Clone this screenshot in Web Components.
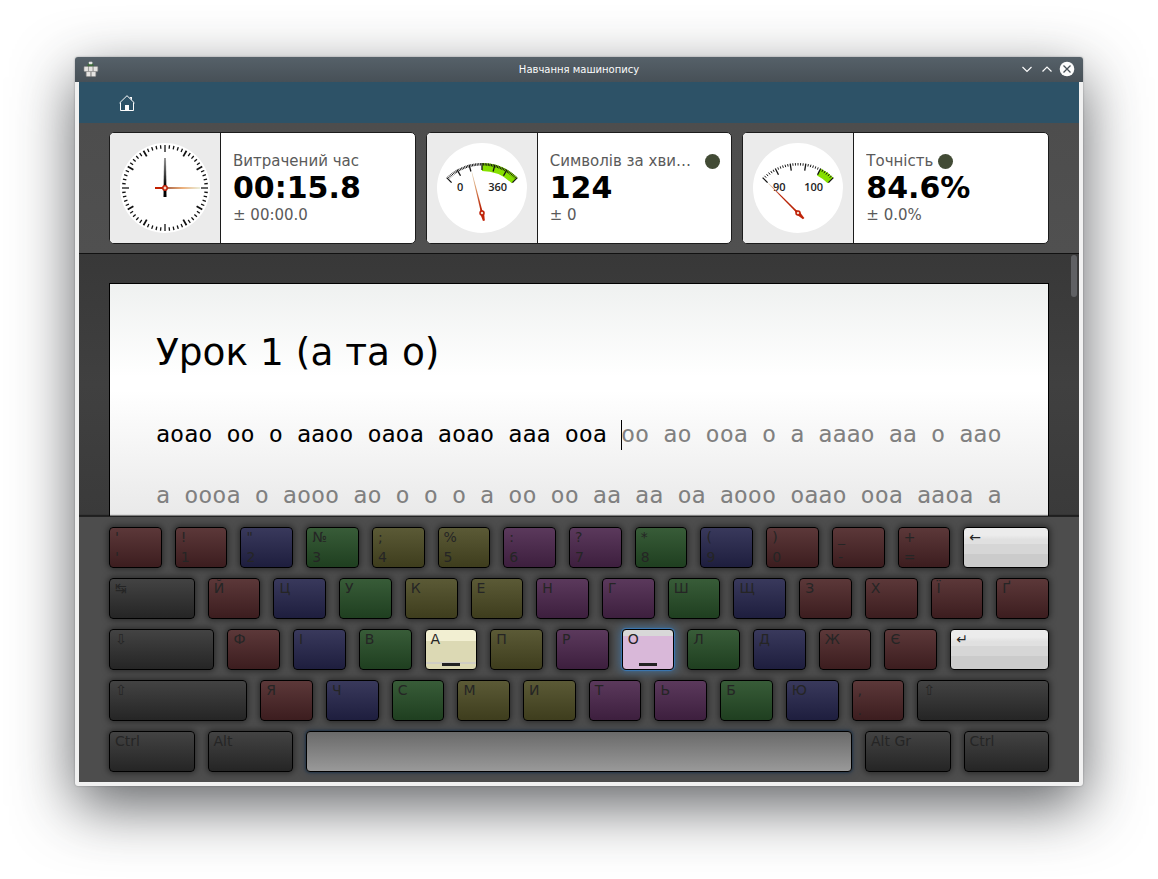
<!DOCTYPE html>
<html lang="uk">
<head>
<meta charset="utf-8">
<title>Навчання машинопису</title>
<style>
  * { box-sizing: border-box; }
  body {
    margin: 0;
    height: 100vh;
    min-height: 760px;
    padding: 57px 75px 93px;
    display: flex;
    background: #fff;
    font-family: "DejaVu Sans", sans-serif;
  }
</style>
</head>
<body>
<app-window caption="Навчання машинопису">
  <app-toolbar></app-toolbar>
  <stats-bar>
    <stat-card label="Витрачений час" value="00:15.8" delta="± 00:00.0">
      <clock-dial seconds="15"></clock-dial>
    </stat-card>
    <stat-card label="Символів за хвилину" value="124" delta="± 0" lamp>
      <gauge-dial low="0" high="360" sections="6" minor="8" good="0" needle="-14"></gauge-dial>
    </stat-card>
    <stat-card label="Точність" value="84.6%" delta="± 0.0%" lamp>
      <gauge-dial low="90" high="100" sections="5" minor="6" good="27" needle="-45"></gauge-dial>
    </stat-card>
  </stats-bar>
  <training-sheet heading="Урок 1 (а та о)"
    typed="аоао оо о ааоо оаоа аоао ааа ооа "
    rest="оо ао ооа о а аааo аа о аао|а оооа о аооо ао о о о а оо оо аа аа оа аооо оаао ооа ааоа а"></training-sheet>
  <key-board></key-board>
</app-window>

<script>
const mount = (el, html) => { el.attachShadow({ mode: 'open' }).innerHTML = '<style>*{box-sizing:border-box}</style>' + html; };

/* Window frame with title bar and system buttons */
customElements.define('app-window', class extends HTMLElement {
  connectedCallback() {
    mount(this, `
    <style>
      :host { flex: 1; min-width: 0; display: flex; flex-direction: column; background: #f1f1f1;
        border-radius: 3px; box-shadow: 0 20px 60px rgba(35,38,41,.72), 0 0 2px rgba(35,38,41,.4); }
      header { display: grid; grid-template-columns: 60px 1fr 60px; align-items: center; height: 25px; padding: 0 8px 1px;
        background: linear-gradient(#566169, #475057); border-radius: 3px 3px 0 0; color: #fcfcfc; }
      h1 { margin: 0; font-size: 10px; font-weight: 400; text-align: center; }
      nav { display: flex; justify-content: flex-end; gap: 4px; }
      button { width: 16px; height: 16px; padding: 0; border: 0; background: none; }
      svg { display: block; }
      main { flex: 1; min-height: 0; margin: 0 4px 4px; display: flex; flex-direction: column; background: #4d4d4d; overflow: hidden; }
    </style>
    <header>
      <svg width="16" height="16" viewBox="0 0 16 16">
        <path d="M5.500 2h4l1.500 3.500H4z" fill="#3f6b3c"/><rect x="5.800" y=".800" width="3.600" height="2.400" rx=".6" fill="#e4e4e4"/>
        <g fill="#e6e4e2" stroke="#8d8b89" stroke-width=".6">
          <rect x="1" y="5.500" width="4.400" height="5" rx=".8"/><rect x="5.600" y="5.500" width="4.400" height="5" rx=".8"/><rect x="10.200" y="5.500" width="4.600" height="5" rx=".8"/>
          <rect x="3.200" y="10.600" width="4.600" height="5" rx=".8"/><rect x="8.200" y="10.600" width="4.600" height="5" rx=".8"/>
        </g>
      </svg>
      <h1>${this.getAttribute('caption')}</h1>
      <nav>
        <button aria-label="Мінімізувати"><svg width="16" height="16" fill="none" stroke="#fcfcfc" stroke-width="1.2"><path d="M3.5 6 8 10.500 12.500 6"/></svg></button>
        <button aria-label="Максимізувати"><svg width="16" height="16" fill="none" stroke="#fcfcfc" stroke-width="1.2"><path d="M3.500 10.500 8 6l4.500 4.500"/></svg></button>
        <button aria-label="Закрити"><svg width="16" height="16"><circle cx="8" cy="8" r="7.300" fill="#fcfcfc"/><path d="m4.500 4.500 7 7m0-7-7 7" stroke="#475057" stroke-width="1.300"/></svg></button>
      </nav>
    </header>
    <main><slot></slot></main>`);
  }
});

customElements.define('app-toolbar', class extends HTMLElement {
  connectedCallback() {
    mount(this, `
    <style>
      :host { flex: none; display: flex; align-items: center; height: 41px; padding: 0 38px; background: #2d5267; }
      button { width: 20px; height: 20px; padding: 2px; border: 0; background: none; }
      svg { display: block; }
    </style>
    <button aria-label="Початкова сторінка"><svg width="16" height="16" viewBox="0 0 16 16" fill="none" stroke="#fcfcfc">
      <path d="M.5 8 8 .700 15.500 8M1.500 7.500v8h13v-8"/><path d="M10.500 2h2.500v3.500z" fill="#fcfcfc" stroke="none"/><path d="M6 10h4v6H6z" fill="#fcfcfc" stroke="none"/>
    </svg></button>`);
  }
});

customElements.define('stats-bar', class extends HTMLElement {
  connectedCallback() {
    mount(this, `
    <style>
      :host { flex: none; display: grid; grid-template-columns: repeat(3, minmax(0, 1fr)); gap: 10px; padding: 9px 30px;
        background: linear-gradient(#4d4d4d, #505050); border-bottom: 1px solid #111; }
    </style><slot></slot>`);
  }
});

customElements.define('stat-card', class extends HTMLElement {
  connectedCallback() {
    const a = n => this.getAttribute(n);
    mount(this, `
    <style>
      :host { display: flex; height: 112px; border: 1px solid #1c1c1c; border-radius: 5px; background: #fff; overflow: hidden; }
      .dial { flex: none; width: 111px; background: #ebebeb; border-right: 1px solid #1c1c1c; }
      .info { flex: 1; min-width: 0; padding: 0 11px 0 12px; display: flex; flex-direction: column; justify-content: center; }
      .top { display: flex; align-items: center; gap: 5px; }
      .label { min-width: 0; overflow: hidden; text-overflow: ellipsis; white-space: nowrap; }
      .label, .delta { font-size: 15px; line-height: 20px; color: #5a5a5a; }
      .value { font-size: 30px; line-height: 34px; font-weight: 700; color: #000; }
      .lamp { flex: none; width: 15px; height: 15px; border-radius: 50%; background: #424b35; }
    </style>
    <div class="dial"><slot></slot></div>
    <div class="info">
      <div class="top"><span class="label">${a('label')}</span>${this.hasAttribute('lamp') ? '<span class="lamp"></span>' : ''}</div>
      <div class="value">${a('value')}</div>
      <div class="delta">${a('delta')}</div>
    </div>`);
  }
});

/* Tick pointing outwards at the given angle, measured clockwise from the top */
const tick = (cx, cy, deg, r1, r2, w, color = '#111') =>
  `<path d="M${cx} ${cy - r1}V${cy - r2}" stroke="${color}" stroke-width="${w}" transform="rotate(${deg} ${cx} ${cy})"/>`;

customElements.define('clock-dial', class extends HTMLElement {
  connectedCallback() {
    let t = '';
    for (let i = 0; i < 60; i++) {
      if (i % 15 === 0) t += tick(55, 55, i * 6, 36, 43, 2, '#666');
      else if (i % 5 === 0) t += tick(55, 55, i * 6, 36.5, 43, 1.8);
      else t += tick(55, 55, i * 6, 39.5, 43, 1.3);
    }
    mount(this, `
    <style>:host { display: block; } svg { display: block; }</style>
    <svg width="110" height="110" viewBox="0 0 110 110">
      <defs>
        <linearGradient id="m" gradientUnits="userSpaceOnUse" x1="55" y1="60" x2="55" y2="25"><stop offset=".2"/><stop offset="1" stop-color="#999"/></linearGradient>
        <linearGradient id="s" gradientUnits="userSpaceOnUse" x1="55" y1="55" x2="55" y2="20"><stop offset="0" stop-color="#a05a40"/><stop offset=".5" stop-color="#e9a468"/><stop offset="1" stop-color="#e4e8cf"/></linearGradient>
      </defs>
      <circle cx="55" cy="55" r="45" fill="#fff"/>${t}
      <path d="M54 25h2l.500 39h-3z" fill="url(#m)"/>
      <g transform="rotate(${this.getAttribute('seconds') * 6} 55 55)"><path d="M54.200 20h1.600l.200 35h-2z" fill="url(#s)"/><path d="M54 55h2v10h-2z" fill="#c22000"/></g>
      <circle cx="55" cy="55" r="2.200" fill="#f3d9c8" stroke="#bf1f06" stroke-width="1.500"/>
    </svg>`);
  }
});

customElements.define('gauge-dial', class extends HTMLElement {
  connectedCallback() {
    const n = k => +this.getAttribute(k), total = n('sections') * n('minor');
    let t = '';
    for (let i = 0; i <= total; i++) {
      const major = i % n('minor') === 0;
      t += tick(55, 80, -45 + 90 * i / total, major ? 43 : 47.5, 50, major ? 1.3 : 0.9);
    }
    const p = (r, d) => `${55 + r * Math.sin(d * Math.PI / 180)} ${80 - r * Math.cos(d * Math.PI / 180)}`;
    mount(this, `
    <style>:host { display: block; } svg { display: block; } text { font: 600 11px "Open Sans", sans-serif; fill: #222; } .high { text-anchor: end; }</style>
    <svg width="110" height="110" viewBox="0 0 110 110">
      <defs><linearGradient id="n" gradientUnits="userSpaceOnUse" x1="55" y1="75" x2="55" y2="38"><stop offset="0" stop-color="#b92508"/><stop offset=".55" stop-color="${n('needle') < -40 ? '#b92508' : '#d99463'}"/><stop offset="1" stop-color="#e6dcc4"/></linearGradient></defs>
      <circle cx="55" cy="55" r="45" fill="#fff"/>
      <path d="M${p(50, n('good'))}A50 50 0 0 1 ${p(50, 45)}L${p(42, 45)}A42 42 0 0 0 ${p(42, n('good'))}Z" fill="#86e000"/>${t}
      <text x="30" y="58">${this.getAttribute('low')}</text><text class="high" x="80" y="58">${this.getAttribute('high')}</text>
      <g transform="rotate(${n('needle')} 55 80)"><path d="M54.700 38h.600l.600 40h-1.800z" fill="url(#n)"/><path d="m55 75 2 5-1 8h-2l-1-8z" fill="#bf2409"/></g>
      <circle cx="55" cy="80" r="2" fill="#f3d9c8" stroke="#bf1f06" stroke-width="1.500"/>
    </svg>`);
  }
});

/* Lesson sheet: the text scales with the sheet so that a line keeps its sixty characters */
customElements.define('training-sheet', class extends HTMLElement {
  connectedCallback() {
    const a = n => this.getAttribute(n);
    const [tail, ...lines] = a('rest').split('|');
    mount(this, `
    <style>
      :host { flex: 1; min-height: 0; position: relative; display: block; padding: 29px 30px 0; overflow: hidden;
        background: linear-gradient(#383838, #404040 50%, #3a3a3a); }
      article { height: 100%; container-type: inline-size; border: solid #000; border-width: 1px 1px 0; padding: 38px 0 0 46px;
        background: linear-gradient(#eff1f0, #fff 40%, #fff 46%, #e9e9e9); overflow: hidden; white-space: pre; }
      h2 { margin: 0 0 22px; font-size: 4.2cqw; line-height: 60px; font-weight: 400; color: #000; }
      p { margin: 0; font-family: "DejaVu Sans Mono", monospace; font-size: 2.626cqw; line-height: 61px; color: #808080; }
      b { font-weight: 400; color: #000; }
      i { display: inline-block; width: 1px; height: 30px; margin: 0 -1px 2px 0; background: #000; vertical-align: middle; }
      .bar { position: absolute; top: 1px; right: 2px; width: 6px; height: 42px; border-radius: 3px; background: #606164; }
    </style>
    <article><h2>${a('heading')}</h2><p><b>${a('typed')}</b><i></i>${tail}</p>${lines.map(l => `<p>${l}</p>`).join('')}</article>
    <div class="bar"></div>`);
  }
});

customElements.define('key-cap', class extends HTMLElement {
  connectedCallback() {
    const a = n => this.getAttribute(n) || '';
    mount(this, `
    <style>
      :host { flex: 8 1 0; min-width: 0; --a: #434343; --b: #252525; --glow: 0 0 6px 1px rgba(0,0,0,.5); }
      :host([color=r]) { --a: #5c3839; --b: #3c1d1f; }
      :host([color=b]) { --a: #39395c; --b: #1e1e3e; }
      :host([color=g]) { --a: #385c38; --b: #1f3f20; }
      :host([color=y]) { --a: #5b5a36; --b: #3e3d1d; }
      :host([color=p]) { --a: #5b395c; --b: #3d1f3e; }
      :host([size="13"]) { flex-grow: 13; } :host([size="15"]) { flex-grow: 15; } :host([size="16"]) { flex-grow: 16; }
      :host([size="20"]) { flex-grow: 20; } :host([size="21"]) { flex-grow: 21; } :host([size="83"]) { flex-grow: 83; }
      button { position: relative; display: flex; flex-direction: column; gap: 2px; width: 100%; height: 41px; padding: 0 5px; border: 1px solid #000; border-radius: 4px;
        background: linear-gradient(var(--a), var(--b)); box-shadow: var(--glow);
        font: 14px/18px "DejaVu Sans", sans-serif; text-align: left; color: #252525; white-space: pre; }
      :host([look=light]) button { background: linear-gradient(#ececec 0 18%, #e0e0e0 30% 42%, #d6d6d6 42% 67%, #cbcbcb 67%); }
      :host([look=left]) button { background: linear-gradient(#f2efd2 0 27%, #dcd9b4 27% 83%, #cfcdc4 83% 87%, #dcd9b4 87%); }
      :host([look=next]) button { background: linear-gradient(#d8d8d8 0 15%, #d9b8d9 15%); box-shadow: 0 0 1px 1px #3a78b5, 0 0 9px 2px rgba(60,125,185,.6); }
      :host([look=space]) button { background: linear-gradient(#6a6a6a, #999); box-shadow: 0 0 2px 1px #253648, 0 0 7px 1px rgba(40,55,72,.6); }
      .bump { position: absolute; left: 50%; bottom: 3px; width: 18px; height: 3px; margin-left: -9px; background: #222; }
    </style>
    <button aria-label="${(a('name') || a('top')).replace('"', '&quot;')}"><span>${a('top')}</span>${a('bottom') ? `<span>${a('bottom')}</span>` : ''}${this.hasAttribute('bump') ? '<span class="bump"></span>' : ''}</button>`);
  }
});

const ROWS = [
  ["''r", "!1r", '"2b', '№3g', ';4y', '%5y', ':6p', '?7p', '*8g', '(9b', ')0r', '_-r', '+=r', { top: '←', size: 13, look: 'light' }],
  [{ top: '↹', size: 13 }, 'Й r', 'Ц b', 'У g', 'К y', 'Е y', 'Н p', 'Г p', 'Ш g', 'Щ b', 'З r', 'Х r', 'Ї r', 'Ґ r'],
  [{ top: '⇩', size: 16 }, 'Ф r', 'І b', 'В g', { top: 'А', look: 'left', bump: '' }, 'П y', 'Р p', { top: 'О', look: 'next', bump: '' }, 'Л g', 'Д b', 'Ж r', 'Є r', { top: '↵', size: 15, look: 'light' }],
  [{ top: '⇧', size: 21 }, 'Я r', 'Ч b', 'С g', 'М y', 'И y', 'Т p', 'Ь p', 'Б g', 'Ю b', ',.r', { top: '⇧', size: 20 }],
  [{ top: 'Ctrl', size: 13 }, { top: 'Alt', size: 13 }, { top: '', name: 'Пробіл', size: 83, look: 'space' }, { top: 'Alt Gr', size: 13 }, { top: 'Ctrl', size: 13 }]
];

customElements.define('key-board', class extends HTMLElement {
  connectedCallback() {
    mount(this, `
    <style>
      :host { flex: none; display: flex; flex-direction: column; gap: 10px; padding: 10px 30px; background: #4d4d4d; border-top: 1px solid #222; box-shadow: 0 -1px 1px rgba(0,0,0,.45); z-index: 1; }
      .row { display: flex; gap: 13px; }
    </style>`);
    for (const keys of ROWS) {
      const row = document.createElement('div');
      row.className = 'row';
      for (const k of keys) {
        const cap = document.createElement('key-cap');
        const spec = typeof k === 'string' ? { top: k[0], bottom: k[1].trim(), color: k[2] } : k;
        for (const name in spec) cap.setAttribute(name, spec[name]);
        row.append(cap);
      }
      this.shadowRoot.append(row);
    }
  }
});
</script>
</body>
</html>
